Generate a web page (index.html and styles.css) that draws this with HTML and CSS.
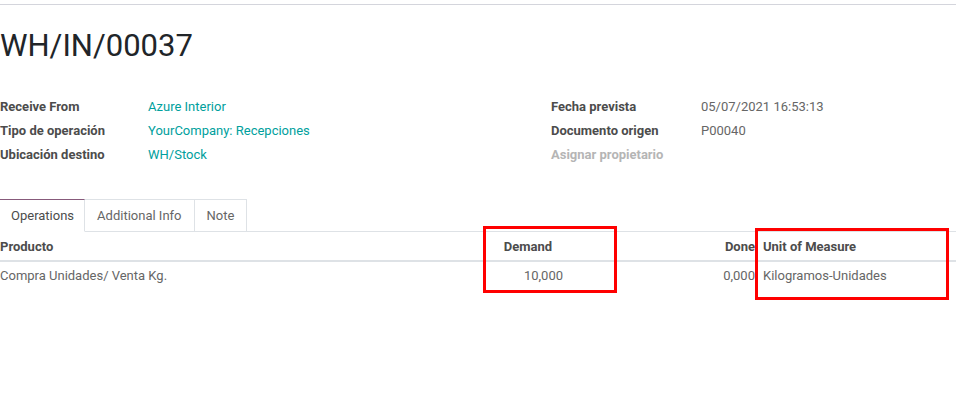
FILE: index.html
```html
<!DOCTYPE html>
<html lang="es">
<head>
    <meta charset="UTF-8">
    <meta name="viewport" content="width=device-width, initial-scale=1.0">
    <title>WH/IN/00037</title>
    <link rel="stylesheet" href="styles.css">
</head>
<body>
    <div class="topbar"></div>
    <div class="sheet">
        <h1 class="title">WH/IN/00037</h1>
        <div class="groups">
            <div class="group">
                <div class="field"><span class="label">Receive From</span><a class="value link">Azure Interior</a></div>
                <div class="field"><span class="label">Tipo de operación</span><a class="value link">YourCompany: Recepciones</a></div>
                <div class="field"><span class="label">Ubicación destino</span><a class="value link">WH/Stock</a></div>
            </div>
            <div class="group right">
                <div class="field"><span class="label">Fecha prevista</span><span class="value">05/07/2021 16:53:13</span></div>
                <div class="field"><span class="label">Documento origen</span><span class="value">P00040</span></div>
                <div class="field"><span class="label muted">Asignar propietario</span></div>
            </div>
        </div>

        <div class="notebook">
            <ul class="tabs">
                <li class="tab active">Operations</li>
                <li class="tab">Additional Info</li>
                <li class="tab">Note</li>
            </ul>
            <table class="lines">
                <colgroup>
                    <col class="c-product">
                    <col class="c-demand">
                    <col class="c-done">
                    <col class="c-uom">
                </colgroup>
                <thead>
                    <tr>
                        <th>Producto</th>
                        <th class="num demand">Demand</th>
                        <th class="num">Done</th>
                        <th class="uom">Unit of Measure</th>
                    </tr>
                </thead>
                <tbody>
                    <tr>
                        <td>Compra Unidades/ Venta Kg.</td>
                        <td class="num demand">10,000</td>
                        <td class="num">0,000</td>
                        <td class="uom">Kilogramos-Unidades</td>
                    </tr>
                </tbody>
            </table>
            <div class="mark mark-demand"></div>
            <div class="mark mark-uom"></div>
        </div>
    </div>
</body>
</html>
```

FILE: styles.css
```css
body {
    margin: 0;
    padding: 0;
    font-family: Roboto, "Liberation Sans", Arial, sans-serif;
    font-size: 13px;
    color: #666666;
    background: #ffffff;
}
.topbar {
    height: 4px;
    border-bottom: 1px solid #d4d5dc;
}
.sheet {
    padding: 0 0 100px 0;
}
.title {
    margin: 23px 0 0 0;
    font-size: 31px;
    line-height: 36px;
    font-weight: 400;
    color: #212529;
}
.groups {
    display: flex;
    margin-top: 31px;
}
.group {
    width: 551px;
}
.group.right {
    flex: 1;
}
.field {
    display: flex;
    height: 24px;
    line-height: 24px;
}
.label {
    width: 148px;
    font-weight: bold;
    color: #4c4c4c;
}
.group.right .label {
    width: 150px;
}
.label.muted {
    color: #b5b5b5;
}
.value {
    color: #666666;
}
.link {
    color: #00a09d;
}
.notebook {
    position: relative;
    margin-top: 32px;
    min-height: 110px;
}
.tabs {
    display: flex;
    list-style: none;
    margin: 0;
    padding: 0;
    border-bottom: 1px solid #dee2e6;
}
.tab {
    height: 31px;
    line-height: 31px;
    padding: 0 12px;
    margin-bottom: -1px;
    border: 1px solid #dee2e6;
    border-left: none;
    color: #666666;
}
.tab.active {
    padding: 0 10px 0 11px;
    color: #4c4c4c;
    border-top-color: #875a7b;
    border-bottom-color: #ffffff;
}
.lines {
    width: 100%;
    border-collapse: collapse;
    table-layout: fixed;
}
.c-product { width: 483px; }
.c-demand { width: 97px; }
.c-done { width: 175px; }
.lines th {
    height: 28px;
    text-align: left;
    font-weight: bold;
    color: #4c4c4c;
    padding: 0;
    border-bottom: 2px solid #dee2e6;
}
.lines td {
    height: 26px;
    padding: 0;
}
.lines .num {
    text-align: right;
}
.lines th.demand {
    padding-right: 28px;
}
.lines td.demand {
    padding-right: 17px;
}
.lines .uom {
    padding-left: 8px;
}
.mark {
    position: absolute;
    border: 3px solid #ff0000;
}
.mark-demand {
    left: 483px;
    top: 27px;
    width: 128px;
    height: 61px;
}
.mark-uom {
    left: 755px;
    top: 29px;
    width: 188px;
    height: 66px;
}
```
